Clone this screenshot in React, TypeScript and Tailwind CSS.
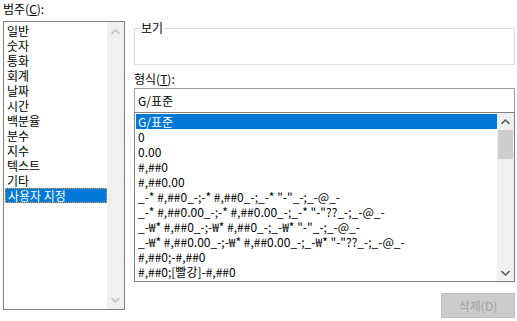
import React from "react";

const categories = ["일반", "숫자", "통화", "회계", "날짜", "시간", "백분율", "분수", "지수", "텍스트", "기타", "사용자 지정"];
const formats = [
  "G/표준",
  "0",
  "0.00",
  "#,##0",
  "#,##0.00",
  '_-* #,##0_-;-* #,##0_-;_-* "-"_-;_-@_-',
  '_-* #,##0.00_-;-* #,##0.00_-;_-* "-"??_-;_-@_-',
  '_-₩* #,##0_-;-₩* #,##0_-;_-₩* "-"_-;_-@_-',
  '_-₩* #,##0.00_-;-₩* #,##0.00_-;_-₩* "-"??_-;_-@_-',
  "#,##0;-#,##0",
  "#,##0;[빨강]-#,##0",
];

function Chevron({ up, color }: { up?: boolean; color: string }) {
  return (
    <svg width="9" height="6" viewBox="0 0 9 6">
      <path
        d={up ? "M0.5 5 L4.5 1 L8.5 5" : "M0.5 1 L4.5 5 L8.5 1"}
        fill="none"
        stroke={color}
        strokeWidth="1.6"
      />
    </svg>
  );
}

export default function App() {
  return (
    <div
      className="w-[517px] h-[321px] bg-white text-black text-[12px] leading-[15px] flex overflow-hidden"
      style={{ fontFamily: '"Noto Sans CJK KR", "Noto Sans", sans-serif' }}
    >
      {/* Left column */}
      <div className="ml-[3px] w-[122px] flex flex-col">
        <div className="h-[21px] pt-[1px]">
          범주(<span className="underline">C</span>):
        </div>
        <div className="h-[289px] border border-[#828282] flex">
          <div className="flex-1 flex flex-col pt-[1px] pl-[1px]">
            {categories.map((c, i) =>
              i === categories.length - 1 ? (
                <div
                  key={c}
                  className="h-[15px] bg-[#0078d7] text-white pl-[2px] border border-dotted border-[#f0a040] leading-[13px]"
                >
                  {c}
                </div>
              ) : (
                <div key={c} className="h-[15px] pl-[2px] leading-[15px]">
                  {c}
                </div>
              )
            )}
          </div>
          <div className="w-[17px] bg-[#f0f0f0] flex flex-col justify-between items-center pt-[7px] pb-[6px]">
            <Chevron up color="#c0c0c0" />
            <Chevron color="#c0c0c0" />
          </div>
        </div>
      </div>

      {/* Right column */}
      <div className="ml-[9px] w-[381px] flex flex-col">
        <div className="relative mt-[28px] h-[37px] border border-[#dcdcdc]">
          <div className="absolute left-[5px] top-[-9px] bg-white px-[1px] leading-[15px]">보기</div>
        </div>
        <div className="mt-[6px] h-[18px]">
          형식(<span className="underline">T</span>):
        </div>
        <div className="mt-[-1px] h-[24px] border border-[#a0a0a0] border-b-0 pl-[3px] flex items-center pb-[1px]">
          G/표준
        </div>
        <div className="h-[170px] border border-[#828282] flex">
          <div className="flex-1 flex flex-col pt-[1px] pl-[1px] whitespace-nowrap overflow-hidden">
            {formats.map((f, i) =>
              i === 0 ? (
                <div key={f} className="h-[15px] bg-[#0078d7] text-white pl-[2px] leading-[15px]">
                  {f}
                </div>
              ) : (
                <div key={f} className="h-[15px] pl-[2px] leading-[15px]">
                  {f}
                </div>
              )
            )}
          </div>
          <div className="w-[17px] bg-[#f0f0f0] flex flex-col items-center">
            <div className="h-[17px] flex items-center justify-center">
              <Chevron up color="#606060" />
            </div>
            <div className="w-[15px] h-[29px] bg-[#cdcdcd]" />
            <div className="flex-1" />
            <div className="h-[17px] flex items-center justify-center">
              <Chevron color="#606060" />
            </div>
          </div>
        </div>
        <div className="flex justify-end mt-[11px]">
          <div className="w-[74px] h-[25px] bg-[#cccccc] border border-[#bfbfbf] text-[#a0a0a0] flex items-center justify-center">
            삭제(D)
          </div>
        </div>
      </div>
    </div>
  );
}
